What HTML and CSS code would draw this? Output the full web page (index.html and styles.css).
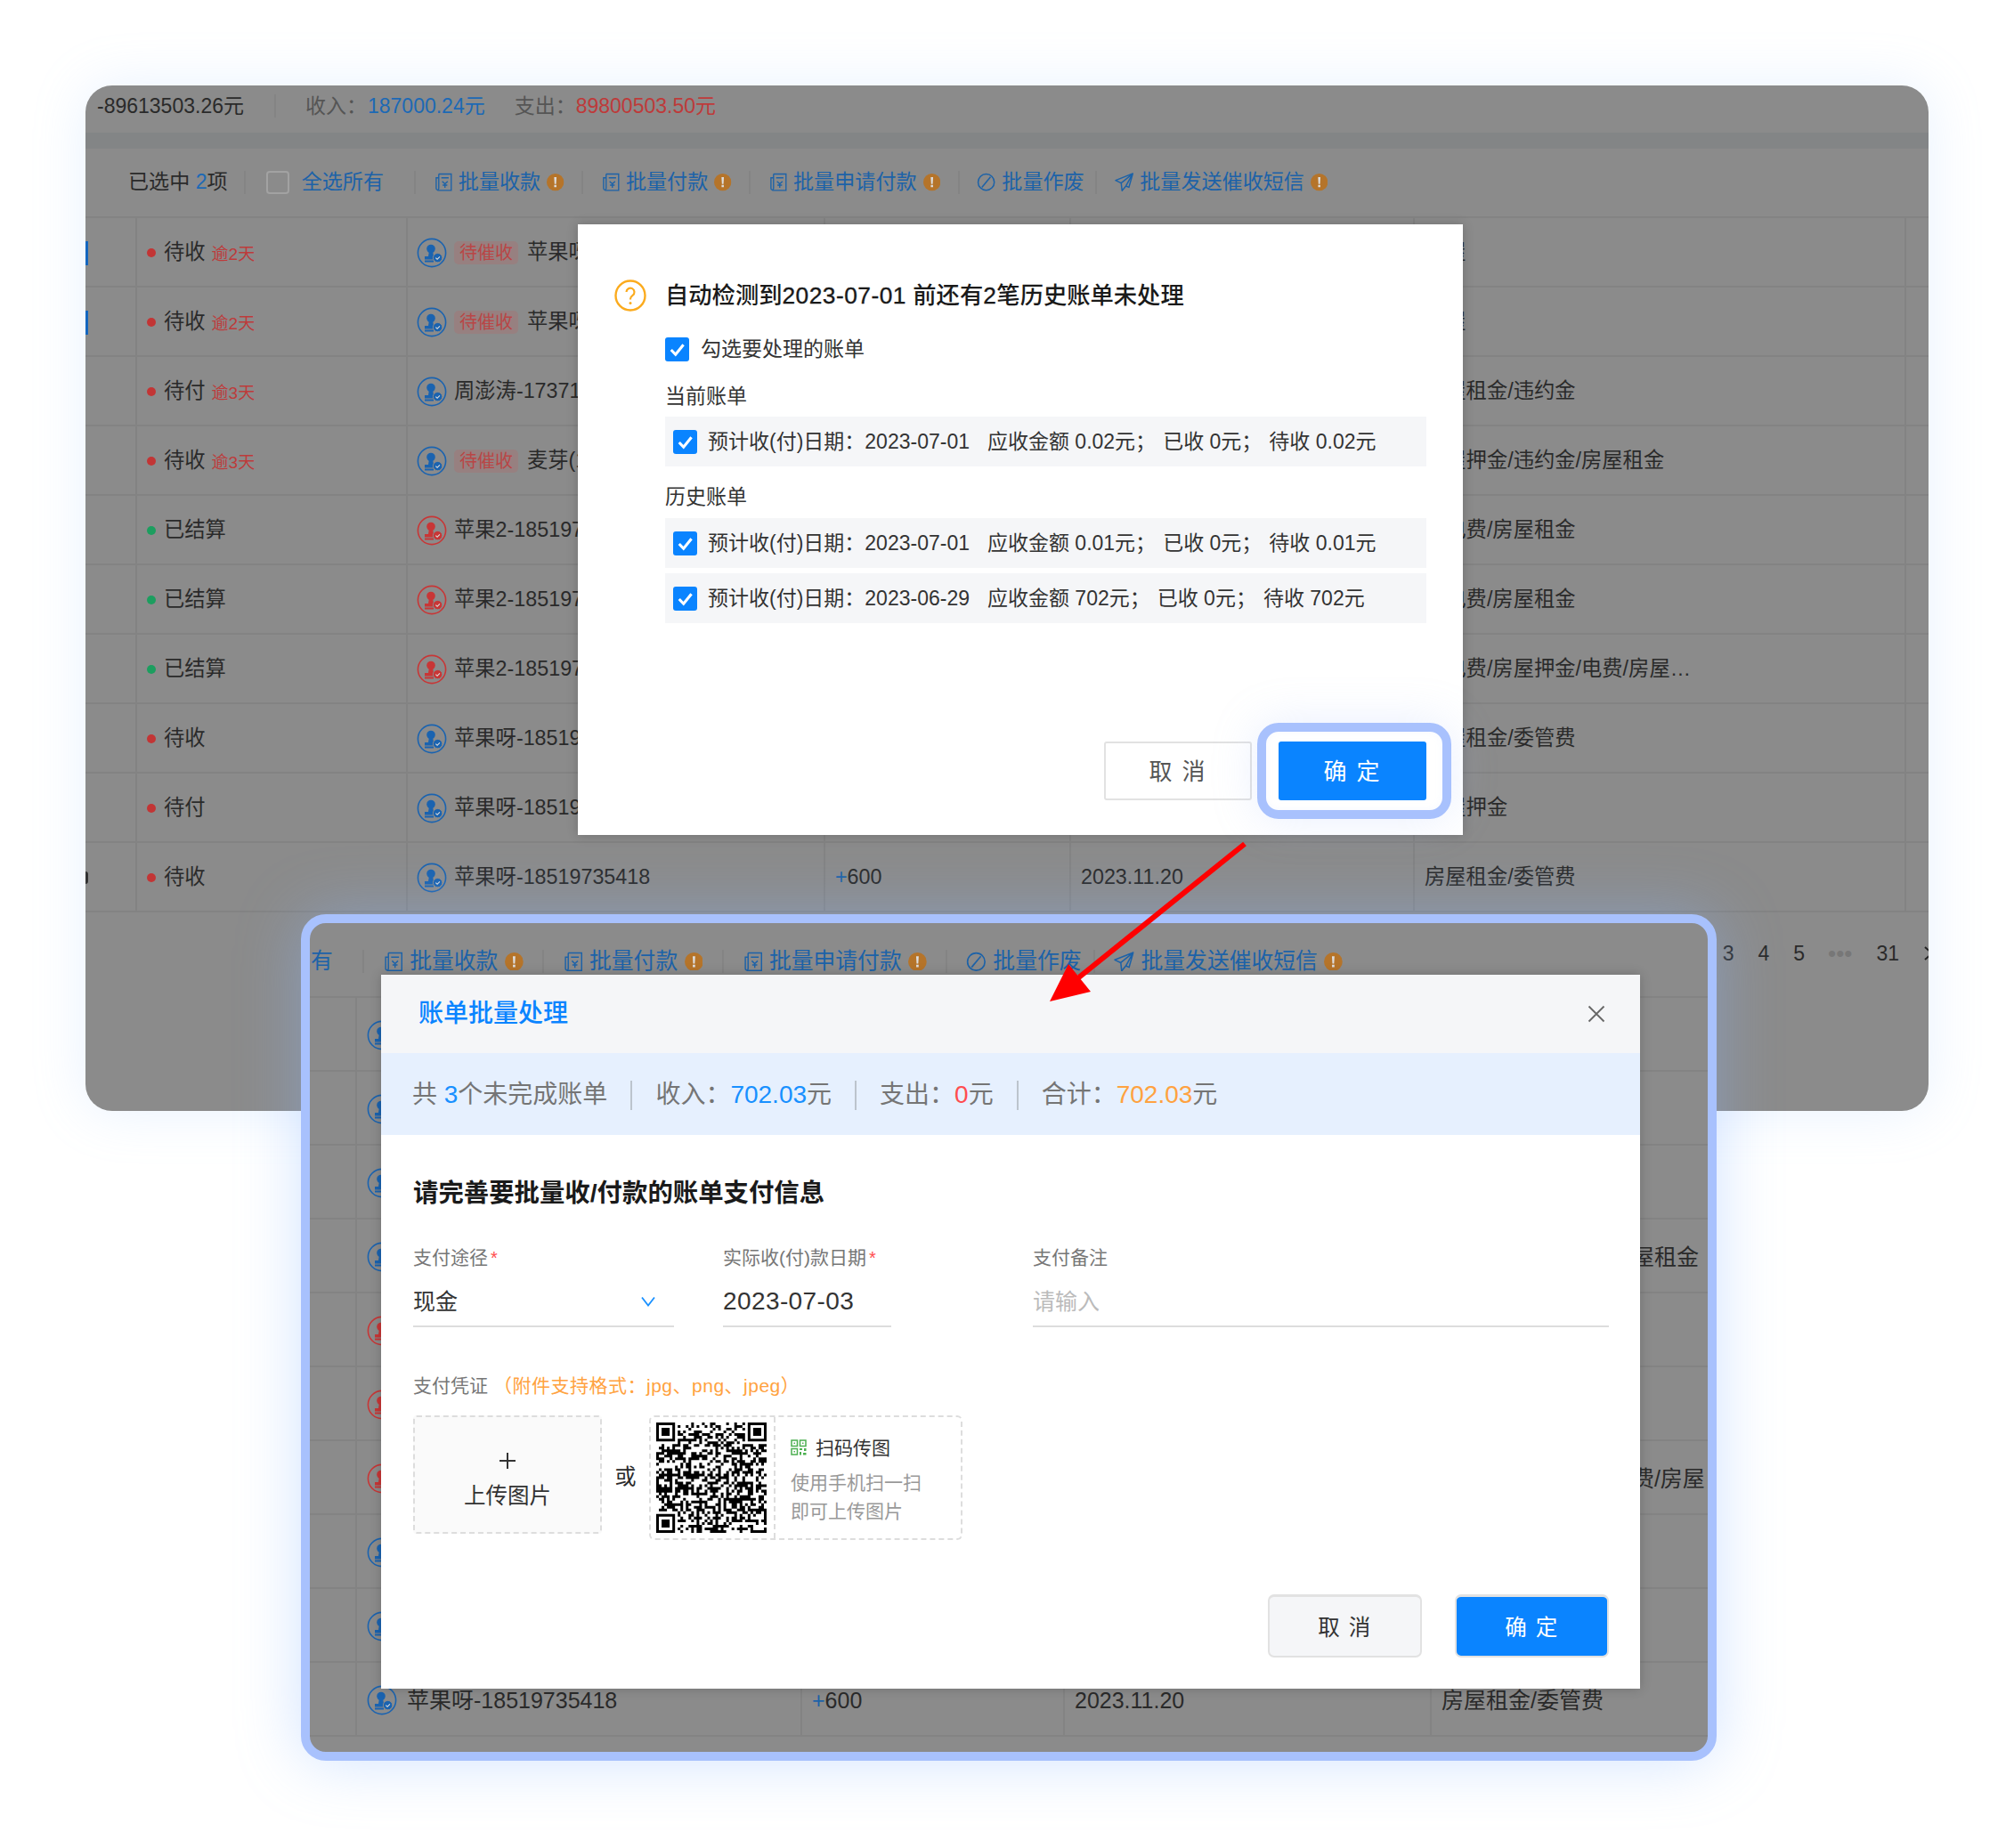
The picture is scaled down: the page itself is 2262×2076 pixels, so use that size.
FILE: index.html
```html
<!DOCTYPE html>
<html lang="zh-CN">
<head>
  <meta charset="UTF-8">
  <title>账单批量处理</title>
  <link rel="stylesheet" href="styles.css">
</head>
<body>
  <svg class="defs" width="0" height="0">
    <symbol id="stamp" viewBox="0 0 34 34">
      <circle cx="17" cy="17" r="15.6" fill="none" stroke="currentColor" stroke-width="1.6"/>
      <circle cx="16" cy="12.5" r="4.8" fill="currentColor"/>
      <path d="M14 15h4l1 6h-6z" fill="currentColor"/>
      <path d="M9 21h12v3.5H9zM9 25.6h10v1.8H9z" fill="currentColor"/>
      <circle cx="23.6" cy="22.6" r="5.2" fill="currentColor" stroke="#8b8b8b"/>
      <path d="M21.4 22.6l1.7 1.7 2.8-3" fill="none" stroke="#ddd" stroke-width="1.1"/>
    </symbol>
    <symbol id="receipt" viewBox="0 0 22 22">
      <g fill="none" stroke="currentColor" stroke-width="1.4">
        <path d="M6 1.500h14.500v19H4.500"/>
        <path d="M6 1.500v17a1.500 1.500 0 0 1-3 0V6h3"/>
        <path d="M9 6h8.500M10 10l3.200 3 3.200-3M13.200 13v4.500M10.500 14.500h5.400"/>
      </g>
    </symbol>
    <symbol id="ban" viewBox="0 0 22 22">
      <circle cx="11" cy="11" r="9.400" fill="none" stroke="currentColor" stroke-width="1.600"/>
      <path d="M6 17L16 5" fill="none" stroke="currentColor" stroke-width="1.600"/>
    </symbol>
    <symbol id="send" viewBox="0 0 22 22">
      <path d="M21 1L1 9l6.500 3 1 9 4.500-5.500 3.500 1.500zM7.500 12L21 1l-8 14.500" fill="none" stroke="currentColor" stroke-width="1.500" stroke-linejoin="round"/>
    </symbol>
    <symbol id="warn" viewBox="0 0 20 20">
      <circle cx="10" cy="10" r="10" fill="#b5742a"/>
      <path d="M8.600 4h2.800l-.5 8H9.100zM8.700 13.200h2.600v2.600H8.700z" fill="#ddd"/>
    </symbol>
    <symbol id="tick" viewBox="0 0 26 26">
      <path d="M6.500 13.500l4.800 5L19.800 8" fill="none" stroke="#fff" stroke-width="3"/>
    </symbol>
  </svg>

  <div class="stage">

    <!-- back page -->
    <section class="card card-back">
      <div class="summary">
        <span class="total">-89613503.26元</span>
        <i class="sep"></i>
        <span class="muted">收入：</span><span class="blue">187000.24元</span>
        <span class="muted out">支出：</span><span class="red">89800503.50元</span>
      </div>
      <div class="strip"></div>
      <div class="toolbar">
        <span class="picked">已选中 <b>2</b>项</span>
        <i class="sep"></i>
        <span class="tool all"><i class="box"></i>全选所有</span>
        <i class="sep"></i>
        <span class="tool"><svg class="ico"><use href="#receipt"/></svg>批量收款<svg class="ico-warn"><use href="#warn"/></svg></span>
        <i class="sep"></i>
        <span class="tool"><svg class="ico"><use href="#receipt"/></svg>批量付款<svg class="ico-warn"><use href="#warn"/></svg></span>
        <i class="sep"></i>
        <span class="tool"><svg class="ico"><use href="#receipt"/></svg>批量申请付款<svg class="ico-warn"><use href="#warn"/></svg></span>
        <i class="sep"></i>
        <span class="tool short"><svg class="ico"><use href="#ban"/></svg>批量作废</span>
        <i class="sep"></i>
        <span class="tool"><svg class="ico"><use href="#send"/></svg>批量发送催收短信<svg class="ico-warn"><use href="#warn"/></svg></span>
      </div>

      <div class="row">
        <div class="cell"><i class="mark"></i></div>
        <div class="cell status"><i class="dot"></i>待收<em>逾2天</em></div>
        <div class="cell who"><svg class="stamp"><use href="#stamp"/></svg><span class="tag">待催收</span>苹果呀-18519735418</div>
        <div class="cell"></div><div class="cell"></div><div class="cell fee">房屋</div><div class="cell"></div>
      </div>
      <div class="row">
        <div class="cell"><i class="mark"></i></div>
        <div class="cell status"><i class="dot"></i>待收<em>逾2天</em></div>
        <div class="cell who"><svg class="stamp"><use href="#stamp"/></svg><span class="tag">待催收</span>苹果呀-18519735418</div>
        <div class="cell"></div><div class="cell"></div><div class="cell fee">房屋</div><div class="cell"></div>
      </div>
      <div class="row">
        <div class="cell"></div>
        <div class="cell status"><i class="dot"></i>待付<em>逾3天</em></div>
        <div class="cell who"><svg class="stamp"><use href="#stamp"/></svg>周澎涛-17371234567</div>
        <div class="cell"></div><div class="cell"></div><div class="cell fee">房屋租金/违约金</div><div class="cell"></div>
      </div>
      <div class="row">
        <div class="cell"></div>
        <div class="cell status"><i class="dot"></i>待收<em>逾3天</em></div>
        <div class="cell who"><svg class="stamp"><use href="#stamp"/></svg><span class="tag">待催收</span>麦芽(1</div>
        <div class="cell"></div><div class="cell"></div><div class="cell fee">房屋押金/违约金/房屋租金</div><div class="cell"></div>
      </div>
      <div class="row">
        <div class="cell"></div>
        <div class="cell status"><i class="dot ok"></i>已结算</div>
        <div class="cell who"><svg class="stamp hot"><use href="#stamp"/></svg>苹果2-18519735418</div>
        <div class="cell"></div><div class="cell"></div><div class="cell fee">水电费/房屋租金</div><div class="cell"></div>
      </div>
      <div class="row">
        <div class="cell"></div>
        <div class="cell status"><i class="dot ok"></i>已结算</div>
        <div class="cell who"><svg class="stamp hot"><use href="#stamp"/></svg>苹果2-18519735418</div>
        <div class="cell"></div><div class="cell"></div><div class="cell fee">水电费/房屋租金</div><div class="cell"></div>
      </div>
      <div class="row">
        <div class="cell"></div>
        <div class="cell status"><i class="dot ok"></i>已结算</div>
        <div class="cell who"><svg class="stamp hot"><use href="#stamp"/></svg>苹果2-18519735418</div>
        <div class="cell"></div><div class="cell"></div><div class="cell fee">水电费/房屋押金/电费/房屋…</div><div class="cell"></div>
      </div>
      <div class="row">
        <div class="cell"></div>
        <div class="cell status"><i class="dot"></i>待收</div>
        <div class="cell who"><svg class="stamp"><use href="#stamp"/></svg>苹果呀-18519735418</div>
        <div class="cell"></div><div class="cell"></div><div class="cell fee">房屋租金/委管费</div><div class="cell"></div>
      </div>
      <div class="row">
        <div class="cell"></div>
        <div class="cell status"><i class="dot"></i>待付</div>
        <div class="cell who"><svg class="stamp"><use href="#stamp"/></svg>苹果呀-18519735418</div>
        <div class="cell"></div><div class="cell"></div><div class="cell fee">房屋押金</div><div class="cell"></div>
      </div>
      <div class="row">
        <div class="cell"><i class="mark dark"></i></div>
        <div class="cell status"><i class="dot"></i>待收</div>
        <div class="cell who"><svg class="stamp"><use href="#stamp"/></svg>苹果呀-18519735418</div>
        <div class="cell"><b class="plus">+</b>600</div><div class="cell">2023.11.20</div><div class="cell fee">房屋租金/委管费</div><div class="cell"></div>
      </div>

      <div class="pager">
        <span>3</span><span>4</span><span>5</span><span class="more">•••</span><span>31</span>
        <svg class="next" width="12" height="20" viewBox="0 0 12 20"><path d="M2 3l8 7-8 7" fill="none" stroke="#222" stroke-width="2"/></svg>
      </div>
    </section>

    <!-- first dialog -->
    <section class="modal modal-check">
      <h2 class="check-title">
        <svg class="ask" width="36" height="36" viewBox="0 0 36 36">
          <circle cx="18" cy="18" r="16.500" fill="none" stroke="#fbab1e" stroke-width="2.400"/>
          <path d="M13.500 14a4.500 4.500 0 1 1 7 3.800c-1.600 1.100-2.500 1.900-2.500 4v.7" fill="none" stroke="#fbab1e" stroke-width="2.200"/>
          <circle cx="18" cy="26.500" r="1.500" fill="#fbab1e"/>
        </svg>
        <span>自动检测到<span class="num">2023-07-01</span> 前还有<span class="num">2</span>笔历史账单未处理</span>
      </h2>
      <div class="check-body">
        <label class="check-all"><svg class="tick"><use href="#tick"/></svg>勾选要处理的账单</label>
        <h3 class="group">当前账单</h3>
        <div class="bill">
          <svg class="tick"><use href="#tick"/></svg>
          <span class="bill-date">预计收(付)日期：2023-07-01</span>
          <span>应收金额 0.02元；</span><span>已收 0元；</span><span>待收 0.02元</span>
        </div>
        <h3 class="group later">历史账单</h3>
        <div class="bill">
          <svg class="tick"><use href="#tick"/></svg>
          <span class="bill-date">预计收(付)日期：2023-07-01</span>
          <span>应收金额 0.01元；</span><span>已收 0元；</span><span>待收 0.01元</span>
        </div>
        <div class="bill next-bill">
          <svg class="tick"><use href="#tick"/></svg>
          <span class="bill-date">预计收(付)日期：2023-06-29</span>
          <span>应收金额 702元；</span><span>已收 0元；</span><span>待收 702元</span>
        </div>
        <div class="check-foot">
          <button class="btn">取 消</button>
          <button class="btn primary ringed">确 定</button>
        </div>
      </div>
    </section>

    <!-- second page, highlighted -->
    <section class="card card-front">
      <div class="toolbar toolbar-lg">
        <span class="cut">有</span>
        <i class="sep"></i>
        <span class="tool"><svg class="ico"><use href="#receipt"/></svg>批量收款<svg class="ico-warn"><use href="#warn"/></svg></span>
        <i class="sep"></i>
        <span class="tool"><svg class="ico"><use href="#receipt"/></svg>批量付款<svg class="ico-warn"><use href="#warn"/></svg></span>
        <i class="sep"></i>
        <span class="tool"><svg class="ico"><use href="#receipt"/></svg>批量申请付款<svg class="ico-warn"><use href="#warn"/></svg></span>
        <i class="sep"></i>
        <span class="tool short"><svg class="ico"><use href="#ban"/></svg>批量作废</span>
        <i class="sep"></i>
        <span class="tool"><svg class="ico"><use href="#send"/></svg>批量发送催收短信<svg class="ico-warn"><use href="#warn"/></svg></span>
      </div>
      <div class="row row-lg"><div class="cell"></div><div class="cell who"><svg class="stamp"><use href="#stamp"/></svg></div><div class="cell"></div><div class="cell"></div><div class="cell"></div></div>
      <div class="row row-lg"><div class="cell"></div><div class="cell who"><svg class="stamp"><use href="#stamp"/></svg></div><div class="cell"></div><div class="cell"></div><div class="cell"></div></div>
      <div class="row row-lg"><div class="cell"></div><div class="cell who"><svg class="stamp"><use href="#stamp"/></svg></div><div class="cell"></div><div class="cell"></div><div class="cell"></div></div>
      <div class="row row-lg"><div class="cell"></div><div class="cell who"><svg class="stamp"><use href="#stamp"/></svg></div><div class="cell"></div><div class="cell"></div><div class="cell fee">房屋押金/违约金/房屋租金</div></div>
      <div class="row row-lg"><div class="cell"></div><div class="cell who"><svg class="stamp hot"><use href="#stamp"/></svg></div><div class="cell"></div><div class="cell"></div><div class="cell"></div></div>
      <div class="row row-lg"><div class="cell"></div><div class="cell who"><svg class="stamp hot"><use href="#stamp"/></svg></div><div class="cell"></div><div class="cell"></div><div class="cell"></div></div>
      <div class="row row-lg"><div class="cell"></div><div class="cell who"><svg class="stamp hot"><use href="#stamp"/></svg></div><div class="cell"></div><div class="cell"></div><div class="cell fee">水电费/房屋押金/电费/房屋</div></div>
      <div class="row row-lg"><div class="cell"></div><div class="cell who"><svg class="stamp"><use href="#stamp"/></svg></div><div class="cell"></div><div class="cell"></div><div class="cell"></div></div>
      <div class="row row-lg"><div class="cell"></div><div class="cell who"><svg class="stamp"><use href="#stamp"/></svg></div><div class="cell"></div><div class="cell"></div><div class="cell"></div></div>
      <div class="row row-lg"><div class="cell"></div><div class="cell who"><svg class="stamp"><use href="#stamp"/></svg>苹果呀-18519735418</div><div class="cell"><b class="plus">+</b>600</div><div class="cell">2023.11.20</div><div class="cell fee">房屋租金/委管费</div></div>
    </section>

    <!-- second dialog -->
    <section class="modal modal-pay">
      <header class="pay-head">
        <h2>账单批量处理</h2>
        <svg class="close" width="20" height="20" viewBox="0 0 20 20"><path d="M1.500 1.500l17 17M18.500 1.500l-17 17" fill="none" stroke="#666" stroke-width="1.800"/></svg>
      </header>
      <div class="pay-summary">
        <span>共 <b class="c-blue">3</b>个未完成账单</span>
        <i></i>
        <span>收入：<b class="c-blue">702.03</b>元</span>
        <i></i>
        <span>支出：<b class="c-red">0</b>元</span>
        <i></i>
        <span>合计：<b class="c-orange">702.03</b>元</span>
      </div>
      <div class="pay-body">
        <h3>请完善要批量收/付款的账单支付信息</h3>
        <div class="fields">
          <div>
            <div class="field-label">支付途径<span class="star">*</span></div>
            <div class="field-value select">现金
              <svg width="18" height="12" viewBox="0 0 18 12"><path d="M2 1.500l7 9 7-9" fill="none" stroke="#1890ff" stroke-width="1.800"/></svg>
            </div>
          </div>
          <div>
            <div class="field-label">实际收(付)款日期<span class="star">*</span></div>
            <div class="field-value date">2023-07-03</div>
          </div>
          <div class="field-note">
            <div class="field-label">支付备注</div>
            <div class="field-value empty">请输入</div>
          </div>
        </div>
        <div class="proof-label">支付凭证<span>（附件支持格式：jpg、png、jpeg）</span></div>
        <div class="proof">
          <div class="upload">
            <svg width="20" height="20" viewBox="0 0 20 20"><path d="M10 1v18M1 10h18" fill="none" stroke="#333" stroke-width="2"/></svg>
            上传图片
          </div>
          <span class="or">或</span>
          <div class="scan">
            <div class="scan-code"><svg id="qr" class="qr" viewBox="0 0 41 41"></svg></div>
            <div class="scan-text">
              <div class="scan-title">
                <svg width="18" height="18" viewBox="0 0 18 18">
                  <g fill="none" stroke="#4caf50" stroke-width="1.500">
                    <rect x="1" y="1" width="6.500" height="6.500"/><rect x="10.500" y="1" width="6.500" height="6.500"/><rect x="1" y="10.500" width="6.500" height="6.500"/>
                  </g>
                  <path d="M3.500 3.500h1.500v1.500H3.500zM13 3.500h1.500v1.500H13zM3.500 13h1.500v1.500H3.500zM10 10h3v2h-3zM15 10h2.500v3H15zM10 14h2v3.500h-2zM14 15h3.500v2.500H14z" fill="#4caf50"/>
                </svg>
                扫码传图
              </div>
              <p>使用手机扫一扫</p>
              <p>即可上传图片</p>
            </div>
          </div>
        </div>
        <div class="pay-foot">
          <button class="btn-lg">取 消</button>
          <button class="btn-lg primary">确 定</button>
        </div>
      </div>
    </section>

    <svg class="arrow" width="2262" height="2076" viewBox="0 0 2262 2076">
      <path d="M1398 948L1208 1101" fill="none" stroke="#ff0000" stroke-width="6"/>
      <path d="M1179 1125l21-42 25 31z" fill="#ff0000"/>
    </svg>
  </div>

  <script src="qr.js"></script>
</body>
</html>
```

FILE: styles.css
```css
* {
  box-sizing: border-box;
}
body {
  margin: 0;
  background: #fff;
  color: #2a2a2a;
  font-family: "Liberation Sans", "Noto Sans CJK SC", sans-serif;
  font-size: 23px;
  line-height: 1;
}
h2, h3, p {
  margin: 0;
  font-size: inherit;
  font-weight: normal;
}
em, i {
  font-style: normal;
}
button {
  font-family: inherit;
  cursor: pointer;
}
.defs {
  position: absolute;
}
.stage {
  position: relative;
  width: 2262px;
  height: 2076px;
  overflow: hidden;
}

/* cards */
.card {
  position: absolute;
  overflow: hidden;
  background: #8b8b8b;
}
.card-back {
  left: 96px;
  top: 96px;
  width: 2070px;
  height: 1152px;
  border-radius: 30px;
  box-shadow: 0 0 60px rgba(150, 195, 255, 0.22);
}
.card-front {
  left: 338px;
  top: 1027px;
  width: 1590px;
  height: 951px;
  border: 10px solid #a8c1fd;
  border-radius: 28px;
  box-shadow: 0 0 70px rgba(140, 185, 255, 0.4);
}

.summary {
  display: flex;
  align-items: center;
  height: 53px;
  padding: 0 0 7px 13px;
}
.summary .sep {
  margin: 0 33px 0 34px;
}
.muted {
  color: #555;
}
.out {
  margin-left: 33px;
}
.blue {
  margin-left: 1px;
  color: #1c69b5;
}
.red {
  color: #be3a3a;
}
.strip {
  height: 18px;
  background: #838586;
}
.sep {
  flex: none;
  width: 2px;
  height: 26px;
  background: #848484;
}

/* toolbars */
.toolbar {
  display: flex;
  align-items: center;
  height: 78px;
  padding-left: 48px;
  border-bottom: 2px solid #838383;
  font-size: 23.1px;
}
.picked {
  margin-right: 18px;
}
.picked b {
  color: #1c69b5;
  font-weight: normal;
}
.tool {
  display: flex;
  align-items: center;
  gap: 0.3em;
  padding: 0 0.85em;
  color: #1c62a8;
}
.tool.short {
  padding-right: 0.55em;
}
.all {
  gap: 14px;
  padding: 0 34px 0 23px;
}
.box {
  width: 26px;
  height: 26px;
  border: 2px solid #a2a2a2;
  border-radius: 4px;
}
.ico {
  flex: none;
  width: 0.92em;
  height: 0.92em;
  color: #1c62a8;
}
.ico-warn {
  flex: none;
  width: 0.84em;
  height: 0.84em;
}
.toolbar-lg {
  height: 84px;
  padding: 4px 0 0 1px;
  font-size: 24.8px;
}
.cut {
  margin-right: 33px;
  color: #1c62a8;
}

/* table rows */
.row {
  display: grid;
  grid-template-columns: 58px 304px 469px 276px 386px 552px 25px;
  height: 78px;
  border-bottom: 2px solid #838383;
  font-size: 23.3px;
}
.cell {
  display: flex;
  align-items: center;
  padding: 2px 0 0 11px;
  border-right: 2px solid #838383;
  white-space: nowrap;
  overflow: hidden;
}
.cell:first-child {
  padding-left: 0;
}
.cell:last-child {
  border-right: none;
}
.mark {
  width: 3px;
  height: 27px;
  background: #1466bf;
}
.mark.dark {
  background: #333;
  height: 14px;
  border-radius: 0 4px 4px 0;
}
.dot {
  width: 10px;
  height: 10px;
  margin-right: 9px;
  border-radius: 50%;
  background: #c23535;
}
.dot.ok {
  background: #1c9e5f;
}
.status em {
  margin: 2px 0 0 7px;
  font-size: 19px;
  color: #bd3b3b;
}
.who {
  padding-left: 10px;
}
.stamp {
  flex: none;
  width: 34px;
  height: 34px;
  margin-right: 8px;
  color: #1a63b0;
}
.stamp.hot {
  color: #c83636;
}
.tag {
  margin-right: 10px;
  padding: 3px 6px;
  border-radius: 5px;
  background: #978080;
  color: #b94646;
  font-size: 20px;
}
.plus {
  color: #1c62a8;
  font-weight: normal;
}
.row-lg {
  grid-template-columns: 53px 500px 295px 412px 1fr;
  height: 83px;
  font-size: 25px;
}
.row-lg .cell {
  padding-top: 3px;
}
.row-lg .who {
  padding-left: 11px;
}
.row-lg .stamp {
  margin-right: 11px;
}

.pager {
  display: flex;
  justify-content: flex-end;
  align-items: center;
  gap: 27px;
  height: 92px;
  margin-right: -6px;
}
.more {
  margin: 0 0 0 -1px;
  color: #777;
  font-size: 26px;
}

/* dialogs */
.modal {
  position: absolute;
  background: #fff;
  box-shadow: 0 0 12px rgba(0, 0, 0, 0.2);
}
.modal-check {
  left: 649px;
  top: 252px;
  width: 994px;
  height: 686px;
  padding: 62px 41px 0;
}
.check-title {
  display: flex;
  align-items: center;
  gap: 21px;
  height: 36px;
  color: #1a1a1a;
  font-size: 26.3px;
  font-weight: 500;
}
.num {
  letter-spacing: 0.5px;
  -webkit-text-stroke: 0.35px #1a1a1a;
}
.ask {
  flex: none;
}
.check-body {
  margin-left: 57px;
}
.tick {
  flex: none;
  width: 27px;
  height: 27px;
  border-radius: 3px;
  background: #0a84ff;
}
.check-all {
  display: flex;
  align-items: center;
  gap: 13px;
  margin-top: 29px;
  color: #333;
}
.group {
  margin: 27px 0 11px;
  line-height: 24px;
  color: #333;
}
.group.later {
  margin: 22px 0 12px;
}
.bill {
  display: flex;
  align-items: center;
  gap: 8px;
  height: 56px;
  padding-left: 9px;
  background: #f5f6f8;
  color: #333;
}
.bill .tick {
  margin-right: 4px;
}
.bill span {
  padding-top: 1px;
}
.bill-date {
  margin-right: 12px;
}
.next-bill {
  margin-top: 6px;
}
.check-foot {
  display: flex;
  justify-content: flex-end;
  gap: 30px;
  margin-top: 133px;
}
.btn {
  width: 166px;
  height: 66px;
  padding-bottom: 4px;
  border: 2px solid #e2e2e2;
  border-radius: 3px;
  background: #fff;
  color: #555;
  font-size: 26px;
  letter-spacing: 2px;
}
.btn.primary {
  border: none;
  background: #0a84ff;
  color: #fff;
}
.ringed {
  position: relative;
}
.ringed::after {
  content: "";
  position: absolute;
  inset: -21px -28px -21px -24px;
  border: 10px solid #a8c1fd;
  border-radius: 24px;
  box-shadow: 0 0 50px rgba(168, 193, 253, 0.25), inset 0 0 8px rgba(168, 193, 253, 0.1);
}

.modal-pay {
  left: 428px;
  top: 1095px;
  width: 1414px;
  height: 802px;
}
.pay-head {
  display: flex;
  justify-content: space-between;
  align-items: center;
  height: 88px;
  padding: 0 39px 0 42px;
  background: #f5f6f8;
}
.pay-head h2 {
  color: #0a84ff;
  font-size: 28px;
  font-weight: 500;
}
.pay-summary {
  display: flex;
  align-items: center;
  height: 92px;
  padding: 2px 0 0 35px;
  background: #e6f0fe;
  color: #757575;
  font-size: 28px;
}
.pay-summary i {
  width: 2px;
  height: 33px;
  margin: 0 26px;
  background: #bcc4cd;
}
.pay-summary b {
  font-weight: normal;
}
.c-blue {
  color: #1890ff;
}
.c-red {
  color: #ff4d4f;
}
.c-orange {
  color: #ffa240;
}
.pay-body {
  padding: 51px 35px 0 36px;
}
.pay-body h3 {
  color: #1a1a1a;
  font-size: 28.4px;
  font-weight: bold;
}
.fields {
  display: grid;
  grid-template-columns: 293px 189px 1fr;
  column-gap: 55px;
  margin-top: 48px;
}
.field-note {
  margin-left: 104px;
}
.field-label {
  height: 22px;
  color: #777;
  font-size: 21px;
  line-height: 22px;
}
.star {
  margin-left: 3px;
  color: #ff4d4f;
  font-size: 20px;
}
.field-value {
  display: flex;
  justify-content: space-between;
  align-items: center;
  height: 67px;
  padding: 21px 0 10px;
  border-bottom: 2px solid #ddd;
  font-size: 25px;
  color: #333;
}
.select svg {
  margin-right: 20px;
}
.date {
  font-size: 28px;
  letter-spacing: 0.4px;
}
.empty {
  color: #bbb;
}
.proof-label {
  margin-top: 55px;
  color: #777;
  font-size: 21px;
  line-height: 22px;
}
.proof-label span {
  margin-left: 6px;
  color: #ffa240;
  letter-spacing: 0.5px;
}
.proof {
  display: flex;
  align-items: flex-start;
  margin-top: 22px;
}
.upload {
  display: flex;
  flex-direction: column;
  align-items: center;
  gap: 18px;
  width: 212px;
  height: 133px;
  padding-top: 39px;
  border: 2px dashed #ddd;
  border-radius: 4px;
  background: #fafafa;
  color: #333;
  font-size: 24.5px;
}
.or {
  width: 53px;
  margin-top: 57px;
  text-align: center;
  font-size: 24px;
}
.scan {
  display: flex;
  width: 352px;
  height: 140px;
  border: 2px dashed #ddd;
  border-radius: 6px;
  font-size: 21px;
}
.scan-code {
  width: 140px;
  padding: 6px;
  border-right: 2px dashed #ddd;
}
.qr {
  display: block;
  width: 124px;
  height: 124px;
  filter: blur(0.45px);
}
.scan-text {
  padding: 23px 0 0 17px;
}
.scan-title {
  display: flex;
  align-items: center;
  gap: 10px;
  height: 22px;
  color: #333;
}
.scan-text p {
  margin-top: 10px;
  line-height: 22px;
  color: #999;
}
.scan-title + p {
  margin-top: 18px;
}
.pay-foot {
  display: flex;
  justify-content: flex-end;
  gap: 37px;
  margin-top: 61px;
}
.btn-lg {
  width: 173px;
  height: 71px;
  padding-bottom: 2px;
  border: 2px solid #e2e2e2;
  border-top-width: 3px;
  border-radius: 7px;
  background: #f5f6f8;
  color: #333;
  font-size: 24.5px;
  letter-spacing: 1.5px;
}
.btn-lg.primary {
  background: #0a84ff;
  color: #fff;
}

.arrow {
  position: absolute;
  left: 0;
  top: 0;
  pointer-events: none;
}
```

FILE: qr.js
```js
// draws a 41x41 code into #qr
const SIZE = 41;
const grid = [];
let seed = 20230703;

function rand() {
  seed = (seed * 1103515245 + 12345) % 2147483648;
  return seed / 2147483648;
}

for (let y = 0; y < SIZE; y++) {
  grid.push([]);
  for (let x = 0; x < SIZE; x++) {
    grid[y].push(rand() > 0.5 ? 1 : 0);
  }
}

function finder(left, top) {
  for (let y = -1; y < 8; y++) {
    for (let x = -1; x < 8; x++) {
      const gy = top + y;
      const gx = left + x;
      if (gy < 0 || gx < 0 || gy >= SIZE || gx >= SIZE) continue;
      const edge = x === 0 || x === 6 || y === 0 || y === 6;
      const core = x >= 2 && x <= 4 && y >= 2 && y <= 4;
      const inside = x >= 0 && x <= 6 && y >= 0 && y <= 6;
      grid[gy][gx] = inside && (edge || core) ? 1 : 0;
    }
  }
}

finder(0, 0);
finder(34, 0);
finder(0, 34);

let d = '';
grid.forEach((line, y) => {
  line.forEach((on, x) => {
    if (on) d += `M${x} ${y}h1v1h-1z`;
  });
});

const path = document.createElementNS('http://www.w3.org/2000/svg', 'path');
path.setAttribute('d', d);
document.getElementById('qr').appendChild(path);
```
